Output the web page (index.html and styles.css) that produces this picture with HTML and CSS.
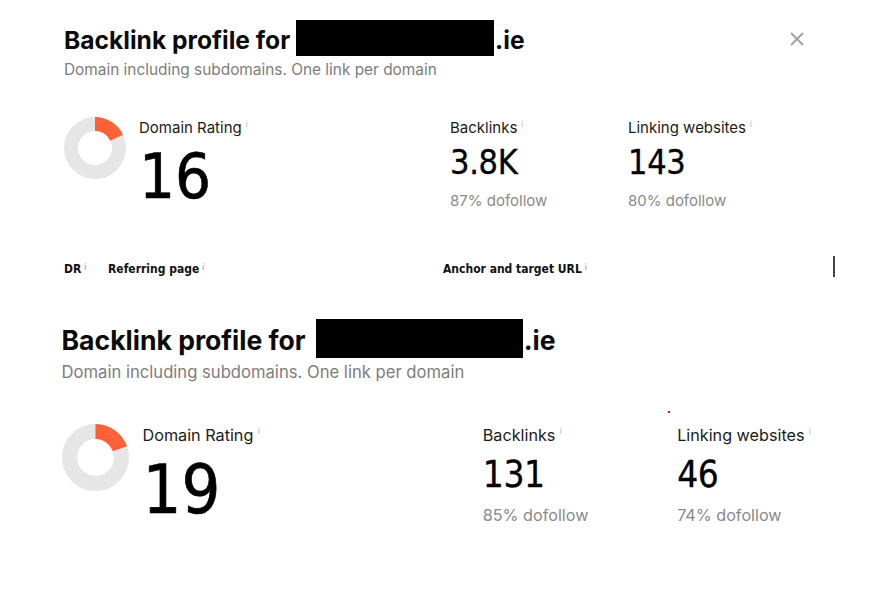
FILE: index.html
```html
<!DOCTYPE html>
<html lang="en">
<head>
<meta charset="utf-8">
<title>Backlink profile</title>
<link rel="stylesheet" href="styles.css">
</head>
<body>
<div class="page">
  <section class="profile profile--first">
    <button class="close" aria-label="Close">
      <svg width="16" height="16" viewBox="0 0 16 16"><path d="M2 2 L14 14 M14 2 L2 14" stroke="#a3a3a3" stroke-width="2" fill="none"/></svg>
    </button>
    <h1 class="title"><span class="t">Backlink profile for </span><span class="redact"></span><span class="t">.ie</span></h1>
    <p class="subtitle">Domain including subdomains. One link per domain</p>
    <div class="stats">
      <div class="dr">
        <svg class="donut" width="62" height="62" viewBox="0 0 62 62">
          <defs>
            <linearGradient id="g1" x1="0" y1="0" x2="1" y2="1">
              <stop offset="0" stop-color="#ff3d30"/>
              <stop offset="1" stop-color="#ff6838"/>
            </linearGradient>
          </defs>
          <circle cx="31" cy="31" r="24" fill="none" stroke="#e6e6e6" stroke-width="14"/>
          <circle cx="31" cy="31" r="24" fill="none" stroke="url(#g1)" stroke-width="14" stroke-dasharray="26.8 200" transform="rotate(-90 31 31)"/>
        </svg>
        <div class="dr-text">
          <div class="label">Domain Rating<span class="info">i</span></div>
          <div class="big">16</div>
        </div>
      </div>
      <div class="stat">
        <div class="label">Backlinks<span class="info">i</span></div>
        <div class="value">3.8K</div>
        <div class="sub">87% dofollow</div>
      </div>
      <div class="stat">
        <div class="label">Linking websites<span class="info">i</span></div>
        <div class="value">143</div>
        <div class="sub">80% dofollow</div>
      </div>
    </div>
    <div class="thead">
      <div class="th">DR<span class="info">i</span></div>
      <div class="th">Referring page<span class="info">i</span></div>
      <div class="th">Anchor and target URL<span class="info">i</span></div>
      <div class="divider"></div>
    </div>
  </section>

  <section class="profile profile--second">
    <h1 class="title"><span class="t">Backlink profile for </span><span class="redact"></span><span class="t">.ie</span></h1>
    <p class="subtitle">Domain including subdomains. One link per domain</p>
    <div class="stats">
      <div class="dr">
        <svg class="donut" width="62" height="62" viewBox="0 0 62 62">
          <defs>
            <linearGradient id="g2" x1="0" y1="0" x2="1" y2="1">
              <stop offset="0" stop-color="#ff3d30"/>
              <stop offset="1" stop-color="#ff6838"/>
            </linearGradient>
          </defs>
          <circle cx="31" cy="31" r="24" fill="none" stroke="#e6e6e6" stroke-width="14"/>
          <circle cx="31" cy="31" r="24" fill="none" stroke="url(#g2)" stroke-width="14" stroke-dasharray="29.3 200" transform="rotate(-90 31 31)"/>
        </svg>
        <div class="dr-text">
          <div class="label">Domain Rating<span class="info">i</span></div>
          <div class="big">19</div>
        </div>
      </div>
      <div class="stat">
        <div class="label">Backlinks<span class="info">i</span></div>
        <div class="value">131</div>
        <div class="sub">85% dofollow</div>
      </div>
      <div class="stat">
        <div class="label">Linking websites<span class="info">i</span></div>
        <div class="value">46</div>
        <div class="sub">74% dofollow</div>
      </div>
    </div>
  </section>
  <span class="speck"></span>
</div>
</body>
</html>
```
FILE: styles.css
```css
* { box-sizing: border-box; }

html, body {
  margin: 0;
  padding: 0;
  background: #fff;
}

body {
  font-family: Inter, "Noto Sans", "DejaVu Sans", sans-serif;
  color: #111;
  width: 896px;
  height: 596px;
  overflow: hidden;
}

.page {
  position: relative;
  width: 896px;
  height: 596px;
}

.profile {
  position: relative;
  padding-left: 64px;
}

.profile--first {
  padding-top: 20px;
}

.profile--second {
  zoom: 1.08;
  padding-left: 57px;
  padding-top: 38px;
}

.close {
  position: absolute;
  top: 31px;
  left: 789px;
  width: 16px;
  height: 16px;
  padding: 0;
  border: 0;
  background: none;
  display: block;
}

.close svg { display: block; }

.title {
  margin: 0;
  font-size: 24.6px;
  font-weight: 700;
  line-height: 30px;
  height: 36px;
  display: flex;
  align-items: center;
  white-space: pre;
  letter-spacing: 0;
  color: #0b0b0b;
}

.t {
  padding-top: 4px;
}

.redact {
  display: inline-block;
  width: 198px;
  height: 36px;
  background: #000;
  margin-right: 1px;
}

.subtitle {
  margin: 4px 0 0;
  font-size: 15.4px;
  line-height: 20px;
  color: #7d7d7d;
}

.stats {
  display: flex;
  margin-top: 38px;
}

.dr {
  display: flex;
  width: 386px;
}

.donut {
  display: block;
  margin-top: -1px;
  margin-right: 13px;
  flex: none;
}

.stat {
  width: 178px;
}

.label {
  font-size: 15px;
  line-height: 20px;
  color: #1a1a1a;
}

.info {
  font-size: 8px;
  color: #b5b5b5;
  vertical-align: top;
  line-height: 12px;
  margin-left: 4px;
}

.big {
  margin-top: 7px;
  font-family: "DejaVu Sans Condensed", "DejaVu Sans", sans-serif;
  font-size: 63px;
  line-height: 64px;
  font-weight: 400;
  letter-spacing: 0;
  color: #000;
  -webkit-text-stroke: 0.6px #000;
}

.value {
  margin-top: 4px;
  font-family: "DejaVu Sans Condensed", "DejaVu Sans", sans-serif;
  font-size: 34px;
  line-height: 40px;
  font-weight: 400;
  letter-spacing: -0.3px;
  color: #000;
  -webkit-text-stroke: 0.3px #000;
}

.sub {
  margin-top: 9px;
  font-size: 15px;
  line-height: 20px;
  color: #8a8a8a;
}

.thead {
  display: grid;
  grid-template-columns: 44px 335px 390px 2px;
  align-items: center;
  margin-top: 45px;
  height: 22px;
}

.th {
  font-family: "Liberation Sans Narrow", "DejaVu Sans Condensed", sans-serif;
  font-size: 12px;
  font-weight: 700;
  line-height: 16px;
  color: #111;
}

.th .info {
  font-family: Inter, sans-serif;
  margin-left: 3px;
}

.divider {
  width: 2px;
  height: 21px;
  margin-bottom: 4px;
  background: #444;
}

.profile--second .redact {
  width: 191px;
  height: 37px;
  margin-left: 4px;
}
.profile--second .dr { width: 390px; }
.profile--second .stat { width: 180px; }
.profile--second .stats { margin-top: 38px; }
.profile--second .big { margin-top: 8px; }
.profile--second .value { margin-top: 6px; }
.profile--second .sub { margin-top: 8px; }

.speck {
  position: absolute;
  left: 668px;
  top: 411px;
  width: 2px;
  height: 2px;
  background: #e41010;
}
```
